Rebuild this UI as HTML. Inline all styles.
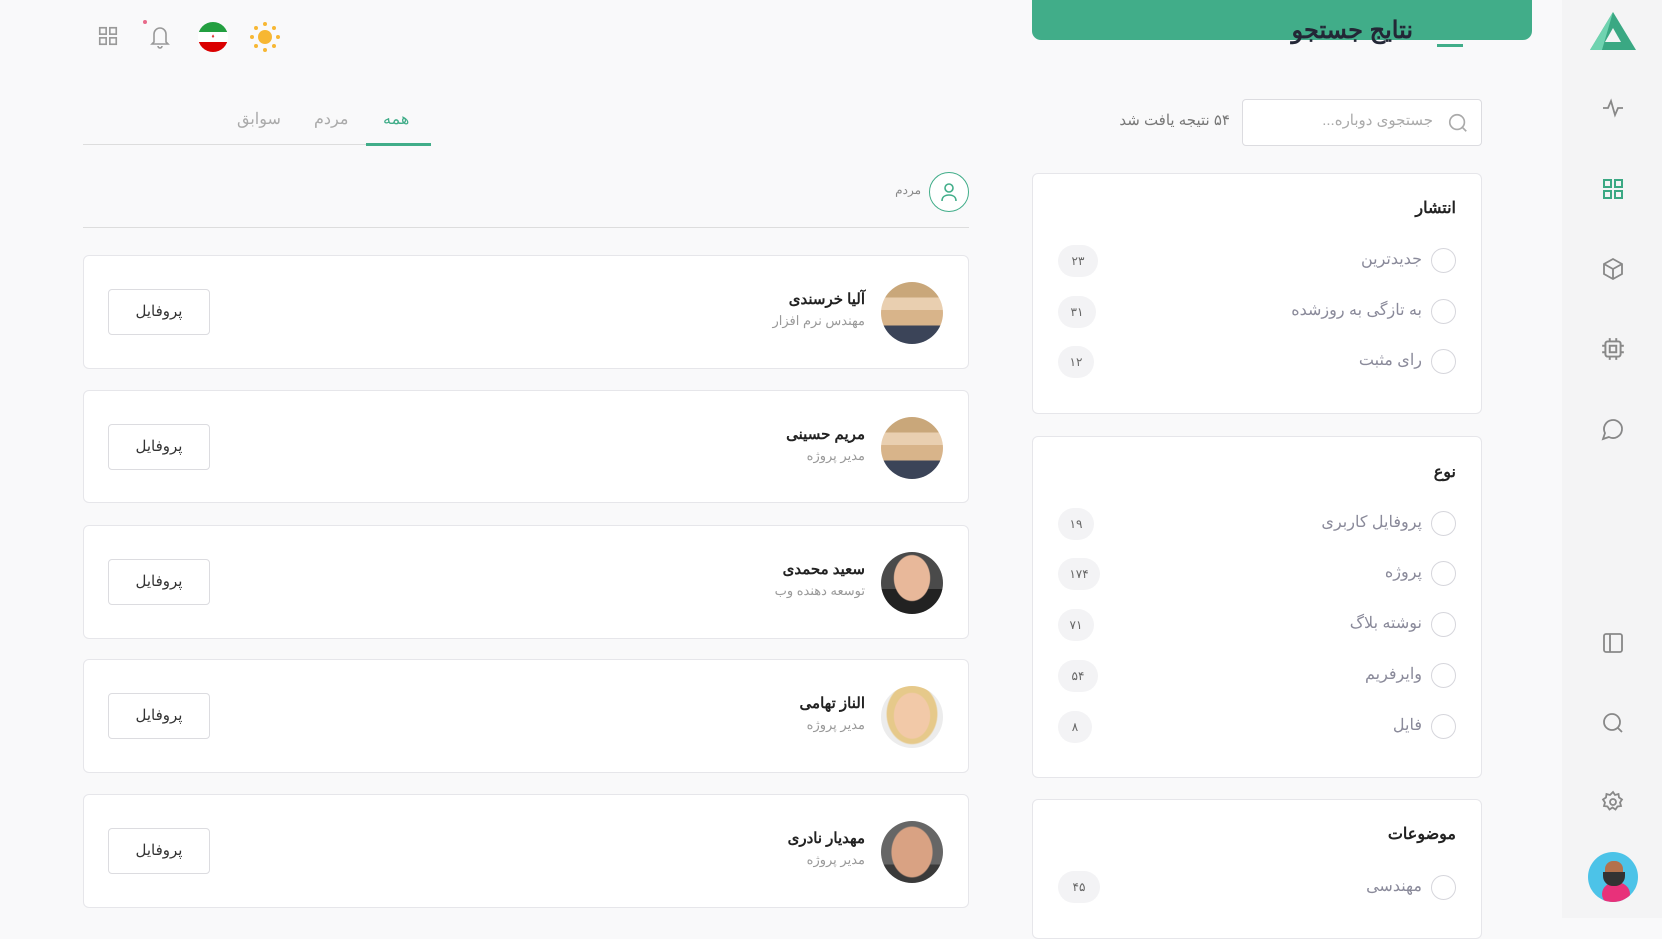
<!DOCTYPE html>
<html><head><meta charset="utf-8"><style>
*{margin:0;padding:0;box-sizing:border-box}
body{width:1662px;height:918px;background:#f9f9fa;font-family:"Liberation Sans","Noto Sans CJK SC",sans-serif;position:relative;overflow:hidden;color:#2b2b3a}
.a{position:absolute}
.card{position:absolute;background:#fff;border:1px solid #e6e6ea;border-radius:6px}
.t{position:absolute;white-space:nowrap;direction:rtl}
.radio{position:absolute;width:25px;height:25px;border:1px solid #d6d6dc;border-radius:50%;background:#fff}
.pill{position:absolute;height:32px;border-radius:16px;background:#f3f3f5;font-size:12px;color:#666;text-align:center;line-height:32px}
.lbl{position:absolute;font-size:16px;color:#8a8a9a;direction:rtl;white-space:nowrap}
.btn{position:absolute;left:24px;top:33px;width:102px;height:46px;border:1px solid #dcdce0;border-radius:4px;font-size:15px;text-align:center;line-height:44px;color:#333;background:#fff}
.av{position:absolute;right:25px;top:26px;width:62px;height:62px;border-radius:50%;overflow:hidden}
.nm{position:absolute;right:103px;top:34px;font-size:15px;font-weight:bold;color:#222;direction:rtl;white-space:nowrap}
.jb{position:absolute;right:103px;top:57px;font-size:13px;color:#999;direction:rtl;white-space:nowrap}
svg.ic{position:absolute}
</style></head><body>
<div class="a" style="left:1562px;top:0;width:100px;height:918px;background:#f4f4f5"></div>
<svg class="ic" style="left:1590px;top:12px" width="46" height="38" viewBox="0 0 46 38"><polygon points="23,0 46,38 0,38" fill="#3aa883"/><polygon points="23,0 0,38 12,38" fill="#6fd3b0"/><polygon points="23,16 31,30 15,30" fill="#f4f4f5"/><polygon points="15,30 31,30 33,38 12,38" fill="#3aa883"/></svg>
<svg class="ic" style="left:1601px;top:96px" width="24" height="24" viewBox="0 0 24 24" fill="none" stroke="#888" stroke-width="1.8"><path d="M2 12h5l3-7 4 14 3-7h5"/></svg>
<svg class="ic" style="left:1601px;top:177px" width="24" height="24" viewBox="0 0 24 24" fill="none" stroke="#3aa883" stroke-width="2"><rect x="3" y="3" width="7" height="7"/><rect x="14" y="3" width="7" height="7"/><rect x="3" y="14" width="7" height="7"/><rect x="14" y="14" width="7" height="7"/></svg>
<svg class="ic" style="left:1601px;top:257px" width="24" height="24" viewBox="0 0 24 24" fill="none" stroke="#888" stroke-width="1.8"><path d="M12 2l9 5v10l-9 5-9-5V7z M3 7l9 5 9-5 M12 12v10"/></svg>
<svg class="ic" style="left:1600px;top:336px" width="26" height="26" viewBox="0 0 24 24" fill="none" stroke="#888" stroke-width="1.8"><rect x="5" y="5" width="14" height="14" rx="2"/><rect x="9" y="9" width="6" height="6"/><path d="M9 2v3M15 2v3M9 19v3M15 19v3M2 9h3M2 15h3M19 9h3M19 15h3"/></svg>
<svg class="ic" style="left:1601px;top:417px" width="24" height="24" viewBox="0 0 24 24" fill="none" stroke="#888" stroke-width="1.8"><path d="M7.9 20A9 9 0 1 0 4 16.1L2 22z"/></svg>
<svg class="ic" style="left:1601px;top:631px" width="24" height="24" viewBox="0 0 24 24" fill="none" stroke="#888" stroke-width="1.8"><rect x="3" y="3" width="18" height="18" rx="2"/><path d="M9 3v18"/></svg>
<svg class="ic" style="left:1601px;top:711px" width="24" height="24" viewBox="0 0 24 24" fill="none" stroke="#888" stroke-width="1.8"><circle cx="11" cy="11" r="8"/><path d="M21 21l-4.3-4.3"/></svg>
<svg class="ic" style="left:1601px;top:790px" width="24" height="24" viewBox="0 0 24 24" fill="none" stroke="#888" stroke-width="1.8"><circle cx="12" cy="12" r="3"/><path d="M12 2l2 3 3.5-1 .5 3.5 3 2-2 3 1 3.5-3.5.5-2 3-3-2-3 2-2-3-3.5-.5 1-3.5-2-3 3-2 .5-3.5 3.5 1z"/></svg>
<div class="a" style="left:1588px;top:852px;width:50px;height:50px;border-radius:50%;background:#4cc3e8;overflow:hidden"><div class="a" style="left:14px;top:30px;width:28px;height:24px;border-radius:50%;background:#e8317a"></div><div class="a" style="left:17px;top:9px;width:18px;height:24px;border-radius:8px;background:#b3714c"></div><div class="a" style="left:15px;top:20px;width:22px;height:14px;border-radius:0 0 10px 10px;background:#333"></div></div>

<div class="a" style="left:1032px;top:0;width:500px;height:40px;background:#41ad89;border-radius:0 0 9px 9px"></div>
<div class="t" style="right:249px;top:16px;font-size:24px;font-weight:bold;color:#232736">نتایج جستجو</div>
<div class="a" style="left:1437px;top:44px;width:26px;height:3px;background:#41ad89"></div>

<div class="a" style="left:1242px;top:99px;width:240px;height:47px;background:#fff;border:1px solid #dcdce0;border-radius:4px"></div>
<div class="t" style="right:229px;top:111px;font-size:15px;color:#aaa">جستجوی دوباره...</div>
<svg class="ic" style="left:1447px;top:112px" width="22" height="22" viewBox="0 0 24 24" fill="none" stroke="#aaa" stroke-width="1.8"><circle cx="11" cy="11" r="8"/><path d="M21 21l-4.3-4.3"/></svg>
<div class="t" style="right:432px;top:111px;font-size:15px;color:#777">۵۴ نتیجه یافت شد</div>

<div class="card" style="left:1032px;top:173px;width:450px;height:241px"></div>
<div class="t" style="right:206px;top:198px;font-size:16px;font-weight:bold;color:#222">انتشار</div>
<div class="card" style="left:1032px;top:436px;width:450px;height:342px"></div>
<div class="t" style="right:206px;top:462px;font-size:16px;font-weight:bold;color:#222">نوع</div>
<div class="card" style="left:1032px;top:799px;width:450px;height:140px"></div>
<div class="t" style="right:206px;top:824px;font-size:16px;font-weight:bold;color:#222">موضوعات</div>

<div class="radio" style="left:1431px;top:248px"></div><div class="lbl" style="right:240px;top:249px">جدیدترین</div><div class="pill" style="left:1058px;top:245px;width:40px">۲۳</div>
<div class="radio" style="left:1431px;top:299px"></div><div class="lbl" style="right:240px;top:300px">به تازگی به روزشده</div><div class="pill" style="left:1058px;top:296px;width:38px">۳۱</div>
<div class="radio" style="left:1431px;top:349px"></div><div class="lbl" style="right:240px;top:350px">رای مثبت</div><div class="pill" style="left:1058px;top:346px;width:36px">۱۲</div>

<div class="radio" style="left:1431px;top:511px"></div><div class="lbl" style="right:240px;top:512px">پروفایل کاربری</div><div class="pill" style="left:1058px;top:508px;width:36px">۱۹</div>
<div class="radio" style="left:1431px;top:561px"></div><div class="lbl" style="right:240px;top:562px">پروژه</div><div class="pill" style="left:1058px;top:558px;width:42px">۱۷۴</div>
<div class="radio" style="left:1431px;top:612px"></div><div class="lbl" style="right:240px;top:613px">نوشته بلاگ</div><div class="pill" style="left:1058px;top:609px;width:36px">۷۱</div>
<div class="radio" style="left:1431px;top:663px"></div><div class="lbl" style="right:240px;top:664px">وایرفریم</div><div class="pill" style="left:1058px;top:660px;width:40px">۵۴</div>
<div class="radio" style="left:1431px;top:714px"></div><div class="lbl" style="right:240px;top:715px">فایل</div><div class="pill" style="left:1058px;top:711px;width:34px">۸</div>
<div class="radio" style="left:1431px;top:875px"></div><div class="lbl" style="right:240px;top:876px">مهندسی</div><div class="pill" style="left:1058px;top:871px;width:42px">۴۵</div>

<svg class="ic" style="left:97px;top:25px" width="22" height="22" viewBox="0 0 24 24" fill="none" stroke="#999" stroke-width="1.8"><rect x="3" y="3" width="7" height="7"/><rect x="14" y="3" width="7" height="7"/><rect x="3" y="14" width="7" height="7"/><rect x="14" y="14" width="7" height="7"/></svg>
<svg class="ic" style="left:148px;top:23px" width="24" height="26" viewBox="0 0 24 26" fill="none" stroke="#999" stroke-width="1.6"><path d="M6 19V11a6 6 0 0 1 12 0v8l2 2H4z M10 23a2 2 0 0 0 4 0"/></svg>
<div class="a" style="left:143px;top:20px;width:4px;height:4px;border-radius:50%;background:#e86a8a"></div>
<div class="a" style="left:198px;top:22px;width:30px;height:30px;border-radius:50%;overflow:hidden;background:#fff"><div style="height:10px;background:#239f40"></div><div style="height:10px;background:#fff;text-align:center;color:#d33;font-size:6px;line-height:10px">♦</div><div style="height:10px;background:#da0000"></div></div>
<svg class="ic" style="left:249px;top:21px" width="32" height="32" viewBox="0 0 32 32"><circle cx="16" cy="16" r="7" fill="#f7b733"/><g fill="#f7b733"><circle cx="16" cy="3" r="2"/><circle cx="16" cy="29" r="2"/><circle cx="3" cy="16" r="2"/><circle cx="29" cy="16" r="2"/><circle cx="7" cy="7" r="2"/><circle cx="25" cy="7" r="2"/><circle cx="7" cy="25" r="2"/><circle cx="25" cy="25" r="2"/></g></svg>

<div class="a" style="left:83px;top:144px;width:348px;height:1px;background:#ddd"></div>
<div class="a" style="left:366px;top:143px;width:65px;height:3px;background:#41ad89"></div>
<div class="t" style="left:383px;top:109px;font-size:16px;color:#41ad89">همه</div>
<div class="t" style="left:314px;top:109px;font-size:16px;color:#aaa">مردم</div>
<div class="t" style="left:237px;top:109px;font-size:16px;color:#aaa">سوابق</div>

<div class="a" style="left:929px;top:172px;width:40px;height:40px;border-radius:50%;border:1.5px solid #41ad89;background:#fff"></div>
<svg class="ic" style="left:940px;top:182px" width="18" height="20" viewBox="0 0 18 20" fill="none" stroke="#41ad89" stroke-width="1.6"><circle cx="9" cy="6" r="4"/><path d="M2 19c0-4 3-6 7-6s7 2 7 6"/></svg>
<div class="t" style="right:741px;top:183px;font-size:12px;color:#888">مردم</div>
<div class="a" style="left:83px;top:227px;width:886px;height:1px;background:#ddd"></div>

<div class="card" style="left:83px;top:255px;width:886px;height:114px"><div class="av" style="background:linear-gradient(180deg,#c9a77a 0 25%,#e9cfb0 25% 45%,#d8b48a 45% 70%,#3b4458 70%)"></div><div class="nm">آلیا خرسندی</div><div class="jb">مهندس نرم افزار</div><div class="btn">پروفایل</div></div>
<div class="card" style="left:83px;top:390px;width:886px;height:113px"><div class="av" style="background:linear-gradient(180deg,#c9a77a 0 25%,#e9cfb0 25% 45%,#d8b48a 45% 70%,#3b4458 70%)"></div><div class="nm">مریم حسینی</div><div class="jb">مدیر پروژه</div><div class="btn">پروفایل</div></div>
<div class="card" style="left:83px;top:525px;width:886px;height:114px"><div class="av" style="background:radial-gradient(ellipse 30% 38% at 50% 42%,#e8b89a 95%,transparent),linear-gradient(180deg,#4a4a4a 60%,#222 60%)"></div><div class="nm">سعید محمدی</div><div class="jb">توسعه دهنده وب</div><div class="btn">پروفایل</div></div>
<div class="card" style="left:83px;top:659px;width:886px;height:114px"><div class="av" style="background:radial-gradient(ellipse 30% 38% at 50% 48%,#f2c9a8 95%,transparent),radial-gradient(ellipse 42% 50% at 50% 45%,#e6c98a 95%,#ececec)"></div><div class="nm">الناز تهامی</div><div class="jb">مدیر پروژه</div><div class="btn">پروفایل</div></div>
<div class="card" style="left:83px;top:794px;width:886px;height:114px"><div class="av" style="background:radial-gradient(ellipse 34% 42% at 50% 50%,#d9a283 95%,transparent),linear-gradient(180deg,#666 0 70%,#3a3a3a 70%)"></div><div class="nm">مهدیار نادری</div><div class="jb">مدیر پروژه</div><div class="btn">پروفایل</div></div>
</body></html>
